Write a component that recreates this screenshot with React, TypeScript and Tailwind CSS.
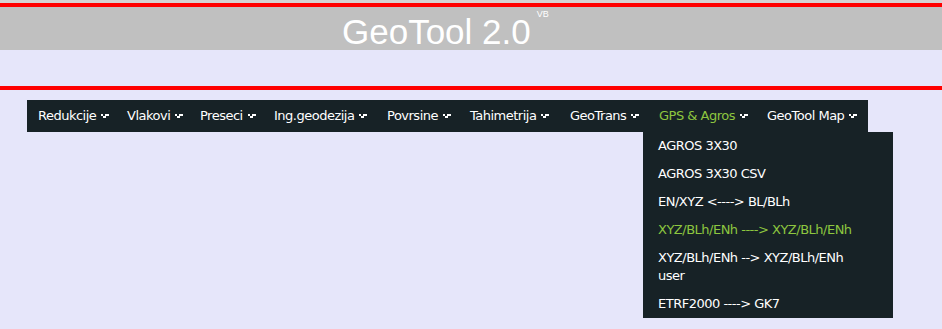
import React from "react";

const Arrow = () => (
  <svg width="8" height="4" viewBox="0 0 8 4" className="ml-[5px] mb-[1px] shrink-0" fill="#ffffff">
    <rect x="0" y="0" width="2" height="2" />
    <rect x="4" y="0" width="4" height="2" />
    <rect x="2" y="2" width="3" height="2" />
  </svg>
);

const items: { label: string; w: string; active?: boolean }[] = [
  { label: "Redukcije", w: "w-[89px]" },
  { label: "Vlakovi", w: "w-[73px]" },
  { label: "Preseci", w: "w-[74px]" },
  { label: "Ing.geodezija", w: "w-[113px]" },
  { label: "Povrsine", w: "w-[83px]" },
  { label: "Tahimetrija", w: "w-[100px]" },
  { label: "GeoTrans", w: "w-[89px]" },
  { label: "GPS & Agros", w: "w-[108px]", active: true },
  { label: "GeoTool Map", w: "w-[112px]" },
];

export default function App() {
  return (
    <div className="w-[942px] h-[329px] bg-[#e6e6fa] overflow-hidden" style={{ fontFamily: '"DejaVu Sans", Verdana, sans-serif' }}>
      <div className="h-[3px] bg-[#d6d3d3]" />
      <div className="h-[4px] bg-[#ff0000]" />
      <div className="h-[43px] bg-[#c0c0c0] flex items-start pl-[342px]">
        <span className="text-[35px] leading-none text-white mt-[7px]" style={{ fontFamily: '"Liberation Sans", Arial, sans-serif' }}>
          GeoTool 2.0
        </span>
        <span className="text-[9px] leading-none text-white ml-[6px] mt-[3px]" style={{ fontFamily: '"Liberation Sans", Arial, sans-serif' }}>
          VB
        </span>
      </div>
      <div className="h-[36px]" />
      <div className="h-[4px] bg-[#ff0000]" />
      <div className="pt-[10px] pl-[27px]">
        <div className="inline-flex h-[32px] bg-[#172226]">
          {items.map((it) => (
            <div key={it.label} className={`${it.w} relative flex items-center pl-[11px] text-[13px] tracking-[-0.5px] ${it.active ? "text-[#8dc63f]" : "text-white"}`}>
              <span className="whitespace-nowrap">{it.label}</span>
              <Arrow />
              {it.active && (
                <div className="absolute left-[-5px] top-full w-[250px] bg-[#172226] pl-[15px] text-white text-[13px] tracking-[-0.5px] leading-[18px]">
                  <div className="py-[5px] whitespace-nowrap">AGROS 3X30</div>
                  <div className="py-[5px] whitespace-nowrap">AGROS 3X30 CSV</div>
                  <div className="py-[5px] whitespace-nowrap">EN/XYZ &lt;----&gt; BL/BLh</div>
                  <div className="py-[5px] whitespace-nowrap text-[#8dc63f]">XYZ/BLh/ENh ----&gt; XYZ/BLh/ENh</div>
                  <div className="py-[5px] whitespace-nowrap">
                    XYZ/BLh/ENh --&gt; XYZ/BLh/ENh
                    <br />
                    user
                  </div>
                  <div className="py-[5px] whitespace-nowrap">ETRF2000 ----&gt; GK7</div>
                </div>
              )}
            </div>
          ))}
        </div>
      </div>
    </div>
  );
}
